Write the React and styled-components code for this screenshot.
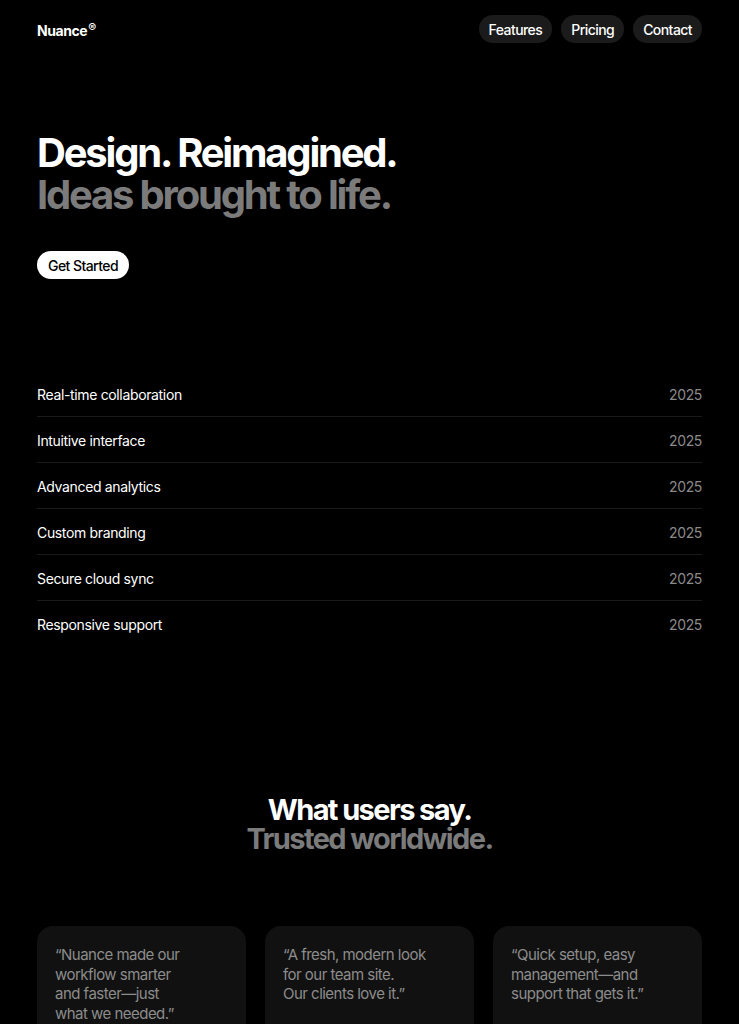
import styled, { createGlobalStyle } from "styled-components";

const GlobalStyle = createGlobalStyle`
  html, body {
    margin: 0;
    padding: 0;
    background: #000;
  }
  body {
    font-family: Inter, "Noto Sans", sans-serif;
    color: #fff;
  }
`;

const Page = styled.div`
  padding: 0 37px;
  min-height: 1024px;
`;

const Nav = styled.nav`
  display: flex;
  align-items: center;
  justify-content: space-between;
  height: 58px;
`;

const Logo = styled.div`
  font-size: 14px;
  font-weight: 700;
  letter-spacing: -0.03em;
  sup {
    font-size: 12px;
    font-weight: 600;
    vertical-align: 4px;
    margin-left: 1px;
  }
`;

const Links = styled.div`
  display: flex;
  gap: 9px;
`;

const Pill = styled.a`
  display: inline-flex;
  align-items: center;
  height: 28px;
  padding: 0 10px;
  border-radius: 14px;
  background: #1b1b1b;
  color: #fff;
  font-size: 14px;
  font-weight: 500;
  letter-spacing: -0.04em;
  text-decoration: none;
`;

const Hero = styled.section`
  padding-top: 74px;
`;

const Headline = styled.h1`
  margin: 0;
  font-size: 40px;
  line-height: 42px;
  font-weight: 700;
  letter-spacing: -0.055em;
`;

const Line = styled.span`
  display: block;
  color: ${(props) => (props.muted ? "#7b7b7b" : "#fff")};
`;

const Button = styled.button`
  margin-top: 35px;
  height: 28px;
  padding: 0 11px;
  border: none;
  border-radius: 14px;
  background: #fff;
  color: #000;
  font-family: inherit;
  font-size: 14px;
  font-weight: 500;
  letter-spacing: -0.04em;
`;

const List = styled.ul`
  list-style: none;
  margin: 92px 0 0;
  padding: 0;
`;

const Row = styled.li`
  box-sizing: border-box;
  display: flex;
  justify-content: space-between;
  align-items: center;
  height: 46px;
  padding-top: 1px;
  font-size: 14px;
  letter-spacing: -0.025em;
  border-bottom: 1px solid ${(props) => (props.last ? "transparent" : "#1a1a1a")};
`;

const Year = styled.span`
  color: #8a8a8a;
`;

const Testimonials = styled.section`
  margin-top: 148px;
  text-align: center;
`;

const SubHeadline = styled.h2`
  margin: 0;
  font-size: 29px;
  line-height: 29px;
  font-weight: 700;
  letter-spacing: -0.055em;
`;

const Cards = styled.div`
  display: grid;
  grid-template-columns: repeat(3, 1fr);
  gap: 19px;
  margin-top: 73px;
  text-align: left;
`;

const Card = styled.div`
  background: #111;
  border-radius: 16px;
  padding: 19px 18px 40px;
  min-height: 100px;
`;

const Quote = styled.p`
  margin: 0;
  font-size: 15px;
  line-height: 19.5px;
  color: #8c8c8c;
  letter-spacing: -0.035em;
`;

const features = [
  "Real-time collaboration",
  "Intuitive interface",
  "Advanced analytics",
  "Custom branding",
  "Secure cloud sync",
  "Responsive support",
];

const quotes = [
  ["\u201CNuance made our", "workflow smarter", "and faster\u2014just", "what we needed.\u201D"],
  ["\u201CA fresh, modern look", "for our team site.", "Our clients love it.\u201D"],
  ["\u201CQuick setup, easy", "management\u2014and", "support that gets it.\u201D"],
];

export default function App() {
  return (
    <>
      <GlobalStyle />
      <Page>
        <Nav>
          <Logo>
            Nuance<sup>®</sup>
          </Logo>
          <Links>
            <Pill href="#">Features</Pill>
            <Pill href="#">Pricing</Pill>
            <Pill href="#">Contact</Pill>
          </Links>
        </Nav>

        <Hero>
          <Headline>
            <Line>Design. Reimagined.</Line>
            <Line muted>Ideas brought to life.</Line>
          </Headline>
          <Button>Get Started</Button>
        </Hero>

        <List>
          {features.map((f, i) => (
            <Row key={f} last={i === features.length - 1}>
              <span>{f}</span>
              <Year>2025</Year>
            </Row>
          ))}
        </List>

        <Testimonials>
          <SubHeadline>
            <Line>What users say.</Line>
            <Line muted>Trusted worldwide.</Line>
          </SubHeadline>
          <Cards>
            {quotes.map((q, i) => (
              <Card key={i}>
                <Quote>
                  {q.map((l, j) => (
                    <span key={j}>
                      {l}
                      <br />
                    </span>
                  ))}
                </Quote>
              </Card>
            ))}
          </Cards>
        </Testimonials>
      </Page>
    </>
  );
}
